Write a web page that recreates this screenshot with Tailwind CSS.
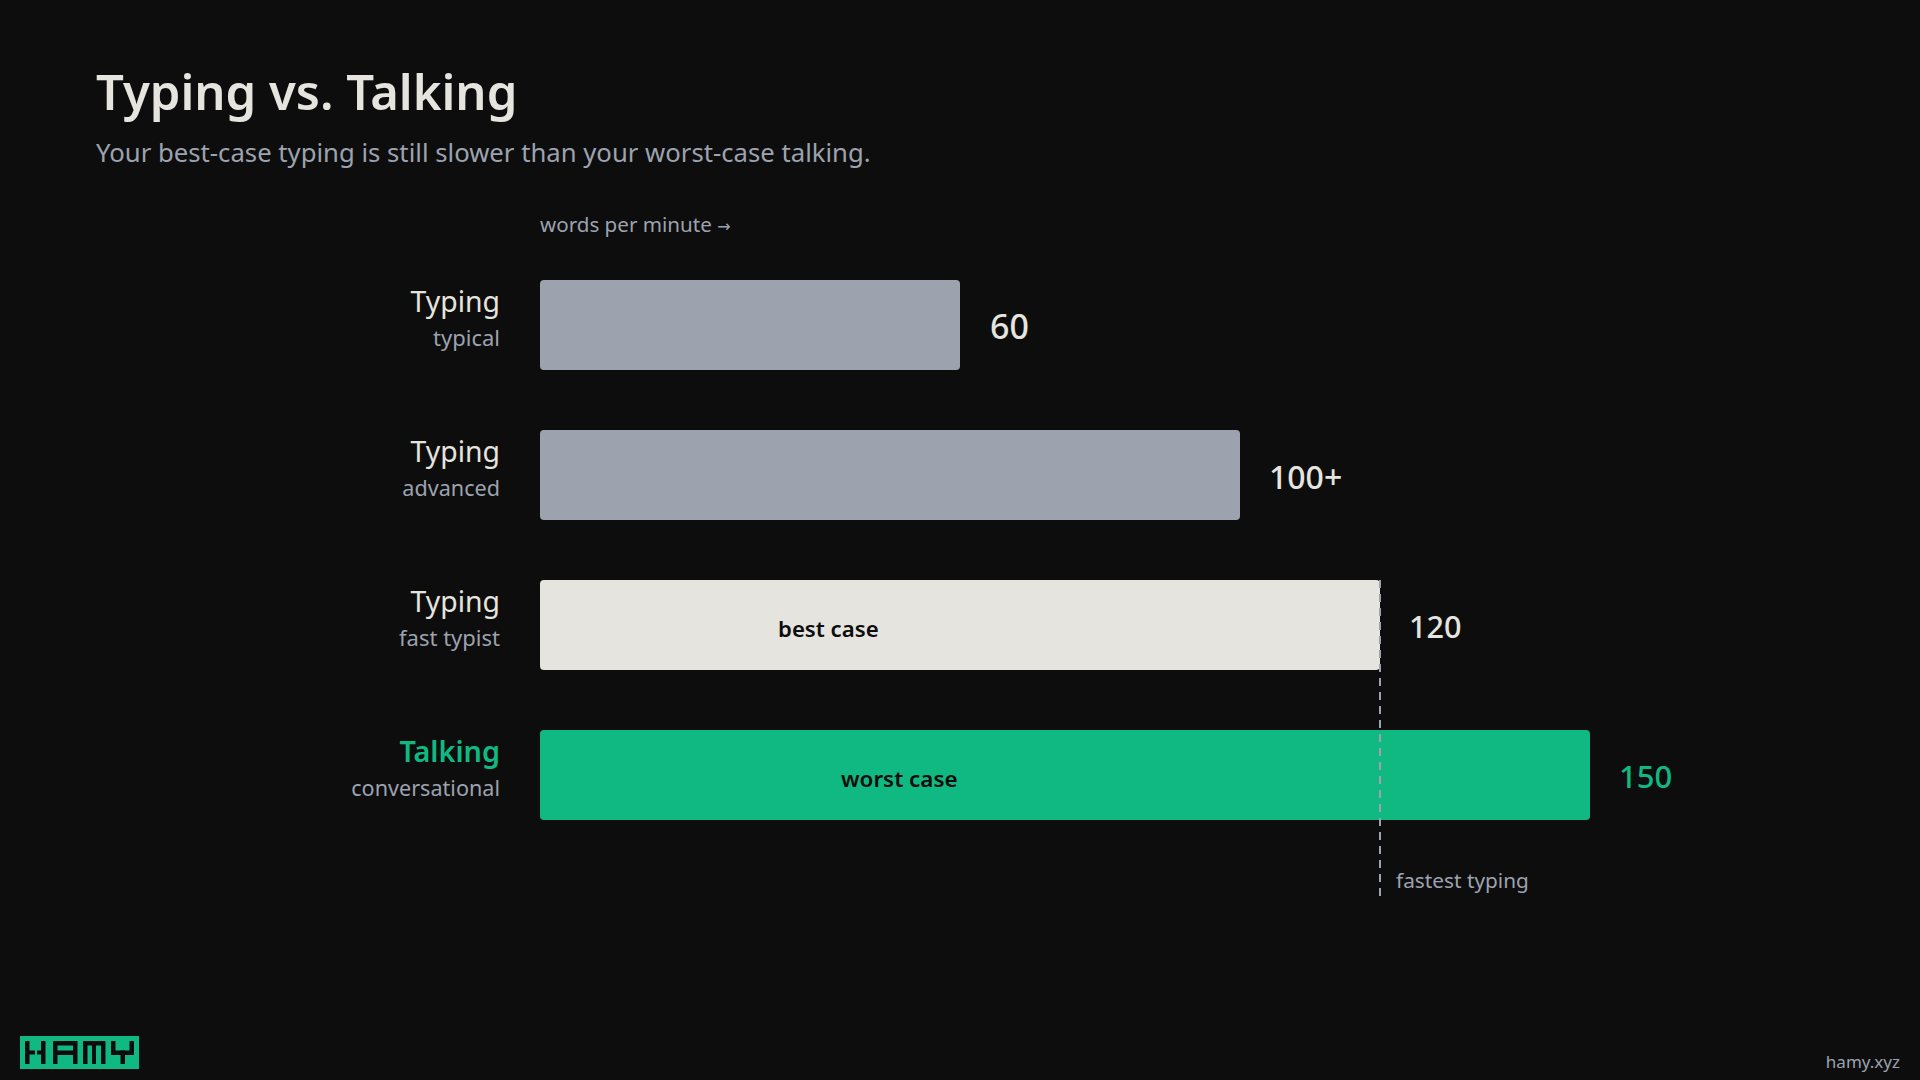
<!DOCTYPE html>
<html lang="en">
<head>
    <meta charset="UTF-8" />
    <title>Typing vs. Talking</title>
    <script src="https://cdn.jsdelivr.net/npm/@tailwindcss/browser@4"></script>
</head>
<body class="w-[1920px] h-[1080px] overflow-hidden bg-[#0d0d0d] font-['Noto_Sans',sans-serif] relative">
    <!-- Header -->
    <header class="pt-[59px] pl-[96px]">
        <h1 class="text-[49px] leading-[64px] font-semibold text-[#e5e4df]">Typing vs. Talking</h1>
        <p class="mt-[12px] text-[25.7px] leading-[36px] text-[#9ca3af]">Your best-case typing is still slower than your worst-case talking.</p>
    </header>

    <!-- Chart -->
    <main class="pl-[540px] mt-[38px]">
        <p class="text-[20.6px] leading-[30px] text-[#9ca3af]">words per minute <span class="font-['DejaVu_Sans'] text-[16px]">→</span></p>
        <div class="mt-[38px] flex flex-col gap-[60px] relative">
            <div class="flex items-center h-[90px] relative">
                <div class="absolute right-full mr-[40px] top-[1px] text-right whitespace-nowrap">
                    <div class="text-[28.4px] leading-[40px] text-[#e5e4df]">Typing</div>
                    <div class="text-[22px] leading-[32px] text-[#9ca3af]">typical</div>
                </div>
                <div class="w-[420px] h-full rounded-[4px] bg-[#9ca3af]"></div>
                <span class="ml-[30px] pt-[3px] text-[34px] font-medium text-[#e5e4df]">60</span>
            </div>
            <div class="flex items-center h-[90px] relative">
                <div class="absolute right-full mr-[40px] top-[1px] text-right whitespace-nowrap">
                    <div class="text-[28.4px] leading-[40px] text-[#e5e4df]">Typing</div>
                    <div class="pt-[1px] text-[21.6px] leading-[32px] text-[#9ca3af]">advanced</div>
                </div>
                <div class="w-[700px] h-full rounded-[4px] bg-[#9ca3af]"></div>
                <span class="ml-[29px] pt-[3px] text-[32px] font-medium text-[#e5e4df]">100+</span>
            </div>
            <div class="flex items-center h-[90px] relative">
                <div class="absolute right-full mr-[40px] top-[1px] text-right whitespace-nowrap">
                    <div class="text-[28.4px] leading-[40px] text-[#e5e4df]">Typing</div>
                    <div class="text-[22px] leading-[32px] text-[#9ca3af]">fast typist</div>
                </div>
                <div class="w-[840px] h-full rounded-[4px] bg-[#e5e4df] flex items-center pl-[238px] pt-[8px] text-[22.2px] font-semibold text-[#0d0d0d]">best case</div>
                <span class="ml-[29px] pt-[3px] text-[30.6px] font-medium text-[#e5e4df]">120</span>
            </div>
            <div class="flex items-center h-[90px] relative">
                <div class="absolute right-full mr-[40px] top-[1px] text-right whitespace-nowrap">
                    <div class="text-[28.8px] leading-[40px] font-semibold text-[#10b981]">Talking</div>
                    <div class="pt-[1px] text-[21.6px] leading-[32px] text-[#9ca3af]">conversational</div>
                </div>
                <div class="w-[1050px] h-full rounded-[4px] bg-[#10b981] flex items-center pl-[301px] pt-[8px] text-[22.4px] font-semibold text-[#0d0d0d]">worst case</div>
                <span class="ml-[29px] pt-[3px] text-[31px] font-medium text-[#10b981]">150</span>
            </div>
            <!-- fastest typing marker -->
            <svg class="absolute left-[839px] top-[300px]" width="2" height="316">
                <line x1="1" y1="0" x2="1" y2="316" stroke="#9ca3af" stroke-width="2" stroke-dasharray="8 6" />
            </svg>
            <div class="absolute left-[856px] top-[585px] text-[20.8px] leading-[30px] text-[#9ca3af]">fastest typing</div>
        </div>
    </main>

    <!-- Logo and site name -->
    <svg class="absolute left-[20px] top-[1036px]" width="119" height="33" viewBox="0 0 119 33">
        <rect width="119" height="33" fill="#10b981" />
        <g fill="#0d0d0d">
            <!-- H -->
            <rect x="5" y="5" width="4.5" height="23" />
            <rect x="9" y="14.5" width="6" height="4" />
            <rect x="17" y="14.5" width="5" height="4" />
            <rect x="21" y="5" width="4.5" height="23" />
            <!-- A -->
            <rect x="33" y="5" width="4.5" height="23" />
            <rect x="53" y="5" width="4.5" height="23" />
            <rect x="33" y="5" width="24" height="4.5" />
            <rect x="33" y="14.5" width="24" height="4.5" />
            <!-- M -->
            <rect x="63" y="5" width="4.5" height="23" />
            <rect x="72" y="5" width="4" height="23" />
            <rect x="81" y="5" width="4.5" height="23" />
            <rect x="63" y="5" width="22" height="4.5" />
            <!-- Y -->
            <rect x="91" y="5" width="4.5" height="14" />
            <rect x="109.5" y="5" width="4.5" height="14" />
            <rect x="91" y="14.5" width="23" height="4.5" />
            <rect x="100.5" y="14.5" width="4.5" height="13.5" />
        </g>
    </svg>
    <div class="absolute right-[20px] bottom-[6px] text-[17px] leading-[24px] text-[#9ca3af]">hamy.xyz</div>
</body>
</html>
